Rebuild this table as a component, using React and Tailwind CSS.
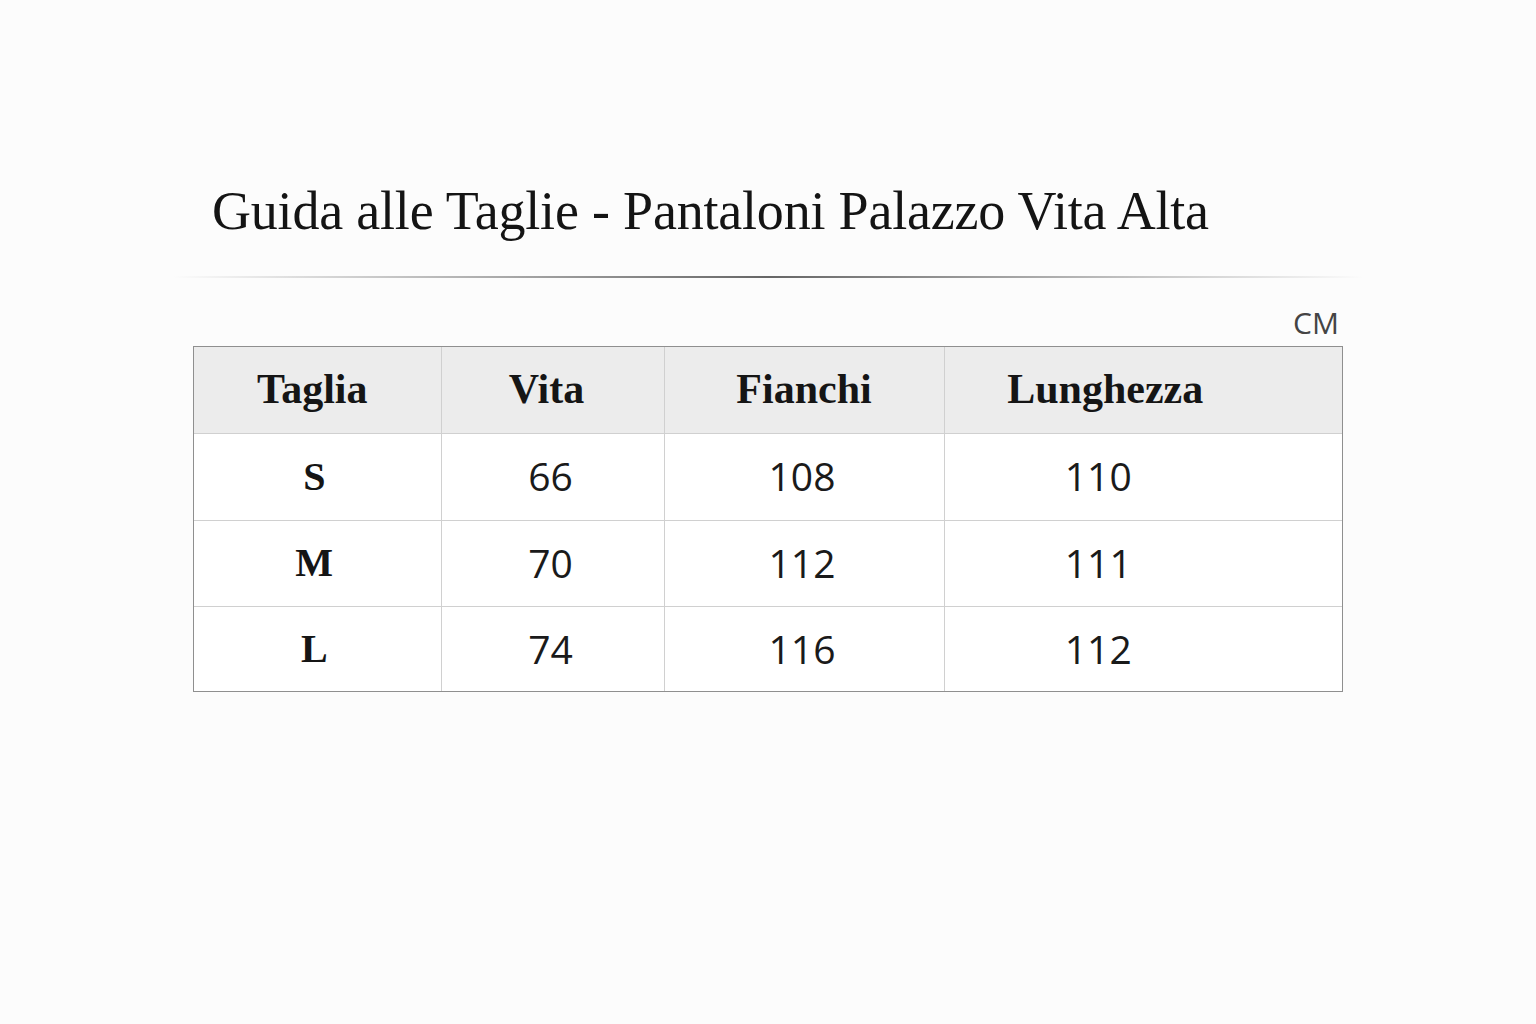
import React from 'react';

const rows = [
  { size: 'S', vita: '66', fianchi: '108', lunghezza: '110', h: 'h-[87px]' },
  { size: 'M', vita: '70', fianchi: '112', lunghezza: '111', h: 'h-[86px]' },
  { size: 'L', vita: '74', fianchi: '116', lunghezza: '112', h: 'h-[85px]' },
];

const serif = "font-['Liberation_Serif','Times_New_Roman',serif]";
const sans = "font-['Open_Sans','Noto_Sans',sans-serif]";

const App = () => {
  return (
    <div className="min-h-screen w-full bg-[#fcfcfc]">
      <div className="mx-auto flex w-[1190px] flex-col pt-[184px]">
        <h1 className={`${serif} ml-[39px] text-[54px] leading-none font-normal tracking-[-0.2px] text-[#141414]`}>
          Guida alle Taglie - Pantaloni Palazzo Vita Alta
        </h1>

        <div className="mt-[38px] h-[2px] w-full bg-gradient-to-r from-transparent via-[#666] to-transparent" />

        <div className="mx-auto w-[1150px]">
          <div className={`${sans} mt-[30px] pr-[4px] text-right text-[30px] leading-none text-[#444]`}>CM</div>

          <div className="mt-[8px] border border-[#8f8f8f]">
            <table className="w-full table-fixed border-collapse border-hidden">
              <colgroup>
                <col className="w-[247px]" />
                <col className="w-[223px]" />
                <col className="w-[280px]" />
                <col />
              </colgroup>
              <thead>
                <tr className="h-[86px] bg-[#ececec]">
                  <th className={`${serif} border border-[#d0d0d0] pr-[10px] text-[42px] font-bold text-[#151515]`}>Taglia</th>
                  <th className={`${serif} border border-[#d0d0d0] pr-[12px] text-[42px] font-bold text-[#151515]`}>Vita</th>
                  <th className={`${serif} border border-[#d0d0d0] text-[42px] font-bold text-[#151515]`}>Fianchi</th>
                  <th className={`${serif} border border-[#d0d0d0] pr-[76px] text-[42px] font-bold text-[#151515]`}>Lunghezza</th>
                </tr>
              </thead>
              <tbody>
                {rows.map((r) => (
                  <tr key={r.size} className={`${r.h} bg-white`}>
                    <td className={`${serif} border border-[#d0d0d0] pr-[6px] text-center text-[40px] font-bold text-[#151515]`}>{r.size}</td>
                    <td className={`${sans} border border-[#d0d0d0] pr-[4px] text-center text-[39px] text-[#1a1a1a]`}>{r.vita}</td>
                    <td className={`${sans} border border-[#d0d0d0] pr-[4px] text-center text-[39px] text-[#1a1a1a]`}>{r.fianchi}</td>
                    <td className={`${sans} border border-[#d0d0d0] pr-[90px] text-center text-[39px] text-[#1a1a1a]`}>{r.lunghezza}</td>
                  </tr>
                ))}
              </tbody>
            </table>
          </div>
        </div>
      </div>
    </div>
  );
};

export default App;
